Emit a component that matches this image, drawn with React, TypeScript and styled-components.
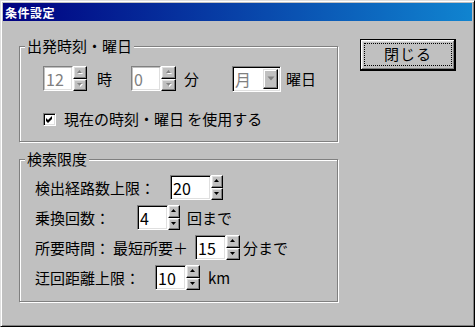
import React from "react";
import styled, { createGlobalStyle } from "styled-components";

const GlobalStyle = createGlobalStyle`
  html, body {
    margin: 0;
    padding: 0;
    background: #c0c0c0;
  }
  body {
    font-family: "Noto Sans CJK JP", "Noto Sans", sans-serif;
    font-size: 15px;
    color: #000;
  }
`;

const Window = styled.div`
  width: 475px;
  height: 327px;
  box-sizing: border-box;
  background: #c0c0c0;
  border: 1px solid;
  border-color: #dfdfdf #000 #000 #dfdfdf;
  box-shadow: inset 1px 1px #fff, inset -1px -1px #808080;
  padding: 2px;
  display: flex;
  flex-direction: column;
`;

const TitleBar = styled.div`
  height: 18px;
  display: flex;
  align-items: center;
  padding-left: 2px;
  background: linear-gradient(to right, #000080, #1084d0);
  color: #fff;
  font-size: 12px;
  font-weight: bold;
  letter-spacing: 0.5px;
`;

const Body = styled.div`
  display: flex;
  padding: 17px 0 0 16px;
  gap: 22px;
`;

const Column = styled.div`
  display: flex;
  flex-direction: column;
  width: 319px;
`;

const GroupBox = styled.fieldset<{ $mt?: number }>`
  margin: ${(p) => p.$mt ?? 0}px 0 0 0;
  padding: 0;
  min-width: 0;
  border: 1px solid #808080;
  box-shadow: inset 1px 1px #fff, 1px 1px #fff;
`;

const Legend = styled.legend`
  margin-left: 5px;
  padding: 0 2px;
  line-height: 16px;
  background: #c0c0c0;
`;

const GroupContent = styled.div<{ $pad: string; $gap?: number }>`
  display: flex;
  flex-direction: column;
  gap: ${(p) => p.$gap ?? 0}px;
  padding: ${(p) => p.$pad};
`;

const Row = styled.div<{ $h?: number; $mt?: number }>`
  display: flex;
  align-items: center;
  height: ${(p) => p.$h ?? 25}px;
  margin-top: ${(p) => p.$mt ?? 0}px;
`;

const Text = styled.span<{ $ml?: number; $w?: number }>`
  margin-left: ${(p) => p.$ml ?? 0}px;
  ${(p) => (p.$w ? `width: ${p.$w}px; flex: none;` : "")}
  line-height: 16px;
  white-space: nowrap;
`;

const Spinner = styled.div<{ $ml?: number }>`
  display: flex;
  margin-left: ${(p) => p.$ml ?? 0}px;
  height: 25px;
`;

const EditBox = styled.div<{ $w: number; $disabled?: boolean }>`
  width: ${(p) => p.$w}px;
  height: 25px;
  box-sizing: border-box;
  display: flex;
  align-items: center;
  padding-left: 2px;
  background: #fff;
  border: 1px solid;
  border-color: #808080 #fff #fff #808080;
  box-shadow: inset 1px 1px ${(p) => (p.$disabled ? "#c0c0c0" : "#000")},
    inset -1px -1px #dfdfdf;
  color: ${(p) => (p.$disabled ? "#808080" : "#000")};
  font-size: 16px;
`;

const SpinStack = styled.div<{ $w: number }>`
  width: ${(p) => p.$w}px;
  display: flex;
  flex-direction: column;
`;

const SpinButton = styled.div`
  flex: 1;
  box-sizing: border-box;
  display: flex;
  align-items: center;
  justify-content: center;
  background: #c0c0c0;
  border: 1px solid;
  border-color: #fff #000 #000 #fff;
  box-shadow: inset -1px -1px #808080, inset 1px 1px #dfdfdf;
`;

const Combo = styled.div<{ $ml?: number }>`
  margin-left: ${(p) => p.$ml ?? 0}px;
  width: 49px;
  height: 26px;
  box-sizing: border-box;
  display: flex;
  align-items: stretch;
  background: #fff;
  border: 1px solid;
  border-color: #808080 #fff #fff #808080;
  box-shadow: inset 1px 1px #000, inset -1px -1px #dfdfdf;
  padding: 2px;
`;

const ComboText = styled.span`
  flex: 1;
  display: flex;
  align-items: center;
  color: #808080;
  font-size: 16px;
`;

const ComboArrow = styled.div`
  width: 15px;
  box-sizing: border-box;
  display: flex;
  align-items: center;
  justify-content: center;
  background: #c0c0c0;
  border: 1px solid;
  border-color: #dfdfdf #000 #000 #dfdfdf;
  box-shadow: inset -1px -1px #808080, inset 1px 1px #fff;
`;

const CheckBox = styled.div`
  width: 13px;
  height: 13px;
  box-sizing: border-box;
  flex: none;
  display: flex;
  align-items: center;
  justify-content: center;
  background: #fff;
  border: 1px solid;
  border-color: #808080 #fff #fff #808080;
  box-shadow: inset 1px 1px #000, inset -1px -1px #dfdfdf;
`;

const CloseButton = styled.button`
  width: 96px;
  height: 32px;
  margin-top: 1px;
  padding: 3px 3px 4px;
  box-sizing: border-box;
  display: flex;
  background: #c0c0c0;
  border: 1px solid #000;
  box-shadow: inset -1px -1px #000, inset 1px 1px #fff,
    inset -2px -2px #808080, inset 2px 2px #dfdfdf;
  font-family: inherit;
  font-size: 15px;
  color: #000;
  cursor: default;
`;

const FocusRect = styled.span`
  flex: 1;
  display: flex;
  align-items: center;
  justify-content: center;
  border: 1px dotted #000;
  padding-bottom: 2px;
  letter-spacing: 1px;
`;

const Arrow = ({ up, disabled }: { up?: boolean; disabled?: boolean }) => {
  const pts = up ? "2,0 4.5,3 -0.5,3" : "-0.5,0 4.5,0 2,3";
  return (
    <svg width="6" height="4" viewBox="-0.5 0 6 4">
      {disabled && <polygon points={pts} fill="#fff" transform="translate(1,1)" />}
      <polygon points={pts} fill={disabled ? "#808080" : "#000"} />
    </svg>
  );
};

type SpinProps = {
  value: string;
  box: number;
  spin?: number;
  ml?: number;
  disabled?: boolean;
};

const SpinField = ({ value, box, spin = 13, ml, disabled }: SpinProps) => (
  <Spinner $ml={ml}>
    <EditBox $w={box} $disabled={disabled}>
      {value}
    </EditBox>
    <SpinStack $w={spin}>
      <SpinButton>
        <Arrow up disabled={disabled} />
      </SpinButton>
      <SpinButton>
        <Arrow disabled={disabled} />
      </SpinButton>
    </SpinStack>
  </Spinner>
);

export default function App() {
  return (
    <>
      <GlobalStyle />
      <Window>
        <TitleBar>条件設定</TitleBar>
        <Body>
          <Column>
            <GroupBox>
              <Legend>出発時刻・曜日</Legend>
              <GroupContent $pad="12px 0 13px 23px">
                <Row>
                  <SpinField value="12" box={30} spin={14} disabled />
                  <Text $ml={10}>時</Text>
                  <SpinField value="0" box={30} spin={15} ml={19} disabled />
                  <Text $ml={8}>分</Text>
                  <Combo $ml={33}>
                    <ComboText>月</ComboText>
                    <ComboArrow>
                      <svg width="8" height="5" viewBox="0 0 8 5">
                        <polygon points="0.5,0.5 7.5,0.5 4,4.5" fill="#808080" />
                      </svg>
                    </ComboArrow>
                  </Combo>
                  <Text $ml={5}>曜日</Text>
                </Row>
                <Row $h={18} $mt={19}>
                  <CheckBox>
                    <svg width="7" height="7" viewBox="0 0 7 7">
                      <polygon points="0,2 2,4 6,0 6,3 2,7 0,5" fill="#000" />
                    </svg>
                  </CheckBox>
                  <Text $ml={8}>現在の時刻・曜日 を使用する</Text>
                </Row>
              </GroupContent>
            </GroupBox>
            <GroupBox $mt={9}>
              <Legend>検索限度</Legend>
              <GroupContent $pad="8px 0 11px 15px" $gap={5}>
                <Row>
                  <Text $w={135}>検出経路数上限：</Text>
                  <SpinField value="20" box={41} spin={12} />
                </Row>
                <Row>
                  <Text $w={102}>乗換回数：</Text>
                  <SpinField value="4" box={31} spin={12} />
                  <Text $ml={7}>回まで</Text>
                </Row>
                <Row>
                  <Text $w={160}>所要時間：&thinsp;最短所要＋</Text>
                  <SpinField value="15" box={31} spin={14} />
                  <Text $ml={3}>分まで</Text>
                </Row>
                <Row>
                  <Text $w={120}>迂回距離上限：</Text>
                  <SpinField value="10" box={31} spin={14} />
                  <Text $ml={8}>km</Text>
                </Row>
              </GroupContent>
            </GroupBox>
          </Column>
          <div>
            <CloseButton>
              <FocusRect>閉じる</FocusRect>
            </CloseButton>
          </div>
        </Body>
      </Window>
    </>
  );
}
